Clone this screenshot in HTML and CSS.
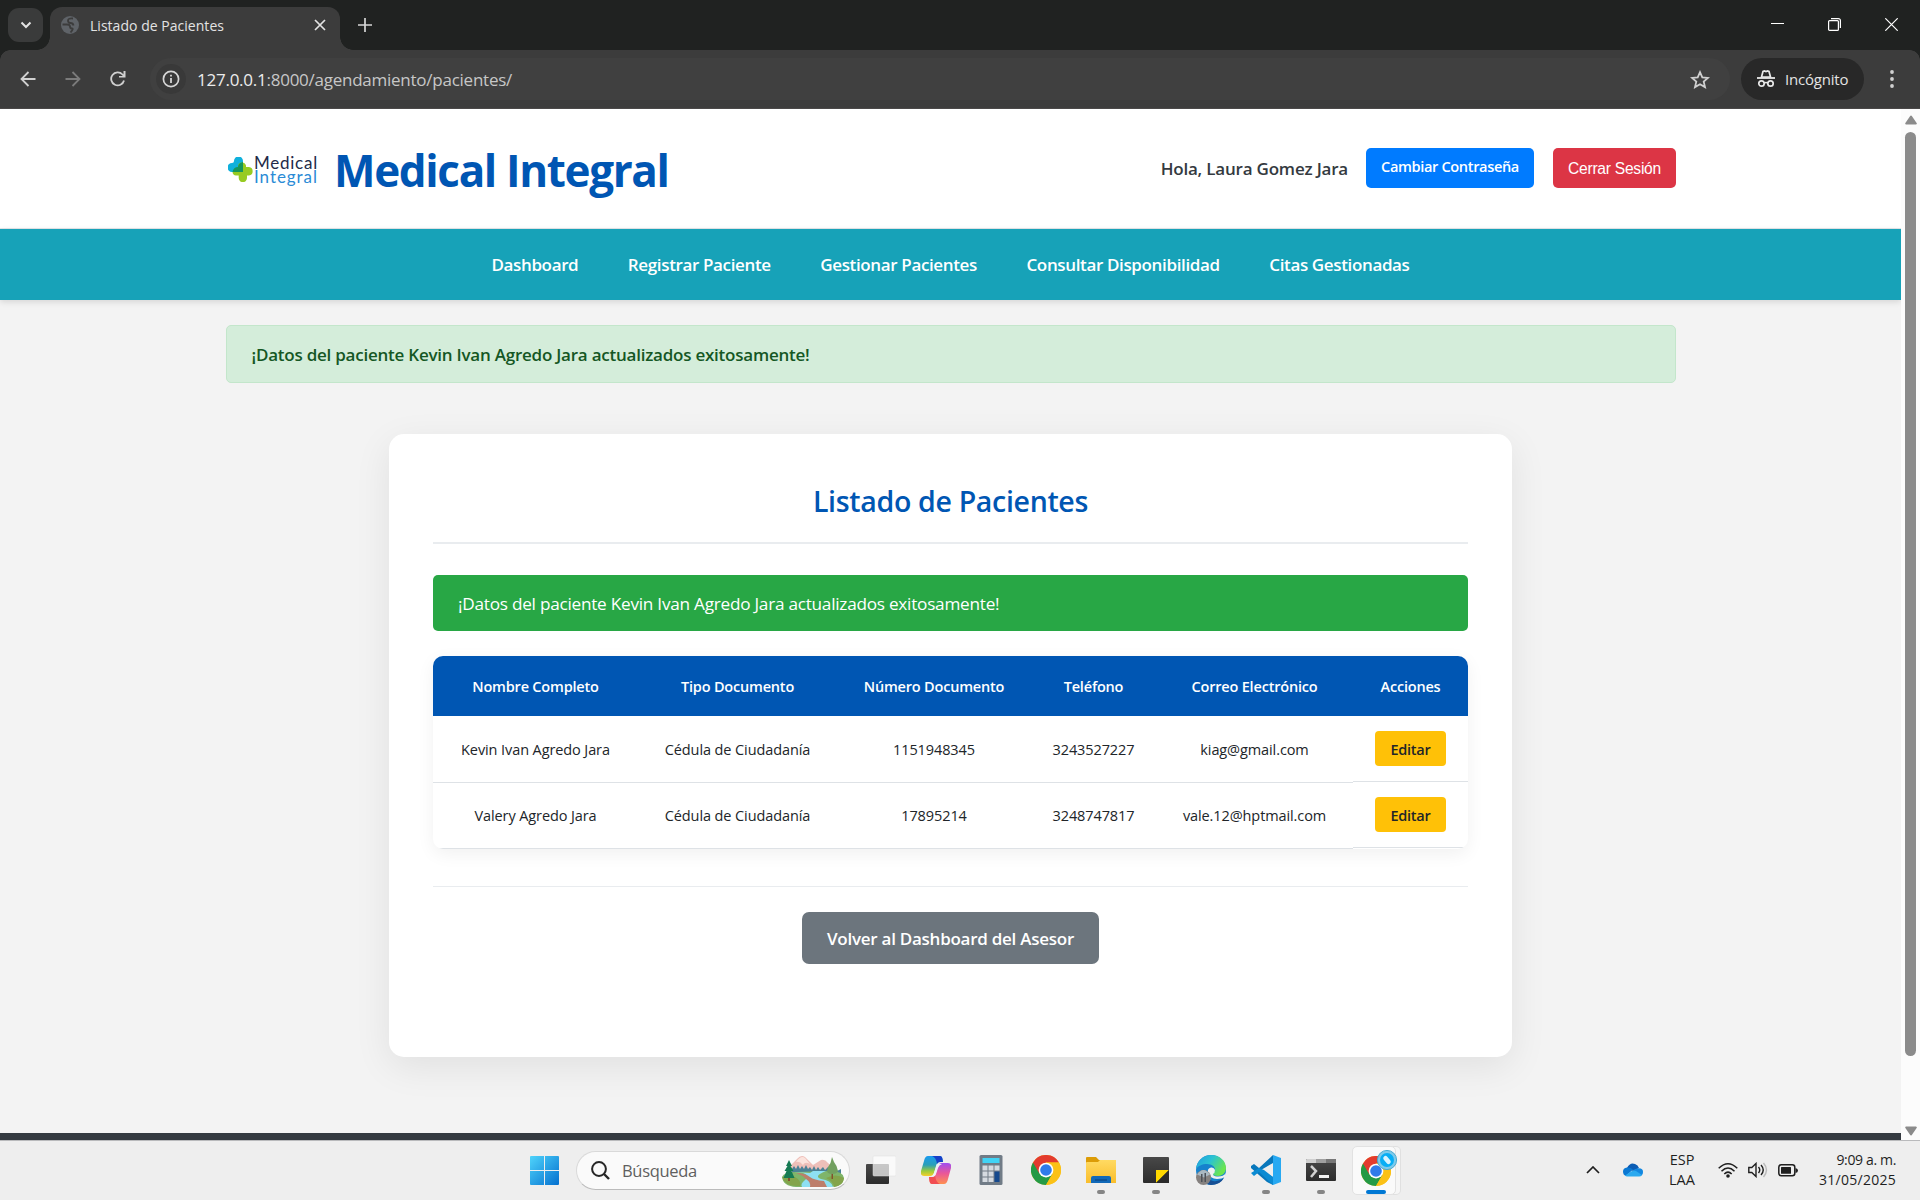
FILE: index.html
```html
<!DOCTYPE html>
<html lang="es">
<head>
<meta charset="utf-8">
<title>Listado de Pacientes</title>
<link rel="stylesheet" href="styles.css">
</head>
<body>
<svg class="defs" width="0" height="0" aria-hidden="true">
  <defs>
    <linearGradient id="winG" x1="0" y1="0" x2="1" y2="1"><stop offset="0" stop-color="#4fd4fb"/><stop offset="1" stop-color="#0470cf"/></linearGradient>
    <linearGradient id="foldG" x1="0" y1="0" x2="0" y2="1"><stop offset="0" stop-color="#ffda62"/><stop offset="1" stop-color="#f9bd2b"/></linearGradient>
    <linearGradient id="copA" x1="0" y1="0" x2="0" y2="1"><stop offset="0" stop-color="#1a9bf0"/><stop offset=".45" stop-color="#2a9fb8"/><stop offset=".75" stop-color="#9ccb3b"/><stop offset="1" stop-color="#f5cf2a"/></linearGradient>
    <linearGradient id="copB" x1="0" y1="0" x2="0" y2="1"><stop offset="0" stop-color="#a04ef0"/><stop offset=".5" stop-color="#ea5797"/><stop offset="1" stop-color="#ff9050"/></linearGradient>
    <linearGradient id="edgeA" x1="0" y1="0" x2="1" y2=".5"><stop offset="0" stop-color="#1f9be0"/><stop offset=".5" stop-color="#2bc3d2"/><stop offset="1" stop-color="#6be54e"/></linearGradient>
    <linearGradient id="darkG" x1="0" y1="0" x2="0" y2="1"><stop offset="0" stop-color="#484848"/><stop offset="1" stop-color="#2c2c2c"/></linearGradient>
    <symbol id="chrome" viewBox="0 0 48 48">
      <circle cx="24" cy="24" r="24" fill="#fbc116"/>
      <path d="M24 24 3.2 12A24 24 0 0 0 24 48L34.4 30z" fill="#249a45"/>
      <path d="M3.2 12A24 24 0 0 1 44.8 12L24 12 13.6 30z" fill="#e33b2e"/>
      <path d="M24 12h20.8A24 24 0 0 1 24 48l10.4-18z" fill="#fbc116"/>
      <circle cx="24" cy="24" r="11.8" fill="#fff"/><circle cx="24" cy="24" r="9.3" fill="#2f7bea"/>
    </symbol>
  </defs>
</svg>

<div class="tabstrip">
  <div class="tab-search"><svg width="12" height="8" viewBox="0 0 12 8"><path d="M1.5 1.5 6 6l4.500-4.500" fill="none" stroke="#e3e3e3" stroke-width="2"/></svg></div>
  <div class="tab">
    <svg width="18" height="18" viewBox="0 0 18 18"><circle cx="9" cy="9" r="9" fill="#5f6368"/><path d="M12 2.500Q7 2 7 4.500T9.500 7t3 2.500M1.500 8.500H6q3 0 3 2t2 2-1.500 4" fill="none" stroke="#3c3c3c" stroke-width="1.800"/></svg>
    <span class="tab-title">Listado de Pacientes</span>
    <svg width="12" height="12" viewBox="0 0 12 12"><path d="M1 1l10 10M11 1 1 11" stroke="#e3e3e3" stroke-width="1.700"/></svg>
  </div>
  <svg class="new-tab" width="14" height="14" viewBox="0 0 14 14"><path d="M7 0v14M0 7h14" stroke="#d6d6d6" stroke-width="1.700"/></svg>
  <div class="window-controls">
    <svg width="13" height="13" viewBox="0 0 13 13"><path d="M0 5.500h13" stroke="#fff"/></svg>
    <svg width="13" height="13" viewBox="0 0 13 13"><rect x=".6" y="2.600" width="9.800" height="9.800" rx="1" fill="none" stroke="#fff" stroke-width="1.200"/><path d="M3 .6h7.400a2 2 0 0 1 2 2V10" fill="none" stroke="#fff" stroke-width="1.200"/></svg>
    <svg width="13" height="13" viewBox="0 0 13 13"><path d="M.3.3l12.400 12.400M12.700.3.3 12.700" stroke="#fff" stroke-width="1.200"/></svg>
  </div>
</div>

<div class="toolbar">
  <div class="nav-icons">
    <svg width="16" height="16" viewBox="0 0 16 16"><path d="M15.500 8H2M8.500 1 1.500 8l7 7" fill="none" stroke="#d0d0d0" stroke-width="1.800"/></svg>
    <svg width="16" height="16" viewBox="0 0 16 16"><path d="M.5 8H14M7.500 1l7 7-7 7" fill="none" stroke="#7b7b7b" stroke-width="1.800"/></svg>
    <svg width="16" height="16" viewBox="0 0 16 16"><path d="M14 9.500A6.500 6.500 0 1 1 12.500 3.500L14.500 5.500" fill="none" stroke="#d0d0d0" stroke-width="1.800"/><path d="M15.500 0v6.500H9V5h4.500V0z" fill="#d0d0d0"/></svg>
  </div>
  <div class="omnibox">
    <div class="site-info"><svg width="18" height="18" viewBox="0 0 18 18"><circle cx="9" cy="9" r="7.600" fill="none" stroke="#d6d6d6" stroke-width="1.700"/><path d="M9 8v5M9 4.800v1.800" stroke="#d6d6d6" stroke-width="1.800"/></svg></div>
    <span class="url"><b>127.0.0.1</b>:8000/agendamiento/pacientes/</span>
    <svg class="star" width="20" height="19" viewBox="0 0 20 19"><path d="M10 2.200l2.300 5.200 5.700.5-4.300 3.700 1.300 5.500-5-2.900-5 2.900 1.300-5.500L2 7.900l5.700-.5z" fill="none" stroke="#d0d0d0" stroke-width="1.800"/></svg>
  </div>
  <div class="incognito">
    <svg width="18" height="18" viewBox="0 0 18 18"><path d="M4.500 7 6 1.500l1.500-.5 1.500.5 1.500-.5 1.500.5L13.500 7z" fill="none" stroke="#e8e8e8" stroke-width="1.700"/><path d="M0 8h18" stroke="#e8e8e8" stroke-width="1.800"/><circle cx="4.500" cy="13.500" r="2.700" fill="none" stroke="#e8e8e8" stroke-width="1.700"/><circle cx="13.500" cy="13.500" r="2.700" fill="none" stroke="#e8e8e8" stroke-width="1.700"/><path d="M7 13.200q2-1.200 4 0" fill="none" stroke="#e8e8e8" stroke-width="1.500"/></svg>
    <span class="incognito-label">Incógnito</span>
  </div>
  <svg class="kebab" width="4" height="18" viewBox="0 0 4 18"><g fill="#d0d0d0"><circle cx="2" cy="2" r="1.900"/><circle cx="2" cy="9" r="1.900"/><circle cx="2" cy="16" r="1.900"/></g></svg>
</div>

<div class="viewport">
  <div class="page">
    <header class="site-header">
      <div class="brand">
        <div class="logo">
          <svg width="25" height="25" viewBox="0 0 25 25"><path d="M6 4a4 4 0 0 1 9 0v11H4a4.500 4.500 0 0 1 0-9q2 0 2-2z" fill="#0fb0dc"/><path d="M10 10V8.500A4.200 4.200 0 0 1 18 8.500V10h3a4.300 4.300 0 0 1 0 8.500h-2V21a4 4 0 0 1-8.300 0v-2.500H8A4 4 0 0 1 4.500 15H10z" fill="#97cb22"/><path d="M15 5v10H4.500q1-5 5.500-5 0-4 5-5z" fill="#16965c"/></svg>
          <div class="logo-text"><span class="logo-top">Medical</span><span class="logo-bottom">Integral</span></div>
        </div>
        <h1>Medical Integral</h1>
      </div>
      <div class="user">
        <span class="hello">Hola, Laura Gomez Jara</span>
        <a class="btn-password">Cambiar Contraseña</a>
        <button class="btn-logout">Cerrar Sesión</button>
      </div>
    </header>
    <nav class="main-nav">
      <a>Dashboard</a>
      <a>Registrar Paciente</a>
      <a>Gestionar Pacientes</a>
      <a>Consultar Disponibilidad</a>
      <a>Citas Gestionadas</a>
    </nav>
    <div class="alert">¡Datos del paciente Kevin Ivan Agredo Jara actualizados exitosamente!</div>
    <main class="card">
      <h2>Listado de Pacientes</h2>
      <div class="success">¡Datos del paciente Kevin Ivan Agredo Jara actualizados exitosamente!</div>
      <div class="table">
        <div class="row head">
          <div>Nombre Completo</div><div>Tipo Documento</div><div>Número Documento</div><div>Teléfono</div><div>Correo Electrónico</div><div>Acciones</div>
        </div>
        <div class="row first">
          <div>Kevin Ivan Agredo Jara</div><div>Cédula de Ciudadanía</div><div>1151948345</div><div>3243527227</div><div>kiag@gmail.com</div><div class="actions"><a class="edit">Editar</a></div>
        </div>
        <div class="row">
          <div>Valery Agredo Jara</div><div>Cédula de Ciudadanía</div><div>17895214</div><div>3248747817</div><div>vale.12@hptmail.com</div><div class="actions"><a class="edit">Editar</a></div>
        </div>
      </div>
      <div class="card-footer"><a class="back">Volver al Dashboard del Asesor</a></div>
    </main>
    <footer class="site-footer"></footer>
  </div>
  <div class="scrollbar">
    <svg width="12" height="10" viewBox="0 0 12 10"><path d="M6 1.500 10.800 8.500H1.200z" fill="#8b8b8b" stroke="#8b8b8b" stroke-width="2" stroke-linejoin="round"/></svg>
    <div class="thumb"></div>
    <svg width="12" height="10" viewBox="0 0 12 10"><path d="M6 8.500 10.800 1.500H1.200z" fill="#8b8b8b" stroke="#8b8b8b" stroke-width="2" stroke-linejoin="round"/></svg>
  </div>
</div>

<div class="taskbar">
  <div class="slot"><svg width="29" height="29" viewBox="0 0 29 29"><path d="M1 0h13v14H0V1q0-1 1-1zM15 0h13q1 0 1 1v13H15zM0 15h14v14H1q-1 0-1-1zM15 15h14v13q0 1-1 1H15z" fill="url(#winG)"/></svg></div>
  <div class="search">
    <svg width="19" height="19" viewBox="0 0 19 19"><circle cx="8" cy="8" r="6.900" fill="none" stroke="#262626" stroke-width="2"/><path d="M13 13l5 5" stroke="#262626" stroke-width="2.400"/></svg>
    <span class="search-label">Búsqueda</span>
    <svg class="landscape" width="62" height="32" viewBox="0 0 62 32">
      <path d="M5 14 15 4q4-5 8-2l8 8 8-5q4-1 7 3l10 9v8H5z" fill="#eebfb9"/><path d="M14 7q5-7 9-4l5 6q-5-3-7 1-3-4-7-3z" fill="#fbe3dd"/>
      <path d="M10 19v-5l2-3 2 3 2-4 2 4 2-3 2 3 2-4 2 4 2-2 2 3 2-4 2 4 2-3 2 3 3-3 2 3 3-3 3 3 3-2 3 3 4-2v5z" fill="#4b8195"/>
      <path d="M0 22q2-5 14-5l34-1q13 0 14 7-1 9-14 9H14Q1 31 0 22z" fill="#7fb56a"/><path d="M12 17l9 1q8 3 2 7-5 4-3 7h31q-2-7-12-8-8-3 5-8H31l-3 2z" fill="#8ee0f3"/>
      <path d="M14 18q9 0 14 4 4 3 14 4l3 6H28q1-5-4-8-4-4-10-6z" fill="#bd7e6b"/><path d="M0 22q7-2 13 0 7 4 5 9Q3 32 0 22zM44 23q10-5 18 0-1 8-10 9 0-5-8-9z" fill="#83a44b"/>
      <path d="M7 5 10 11H8.500l3 5H9.500l3 7h-11l3-7H2.500l3-5H4z" fill="#157a53"/><path d="M6 23h2v3H6zM49.500 18h1.500v6h-1.500z" fill="#83522e"/><path d="M50 2l2 5 2.500 4 1.500 5q-1 3-6 3-4.500 0-5-3l1-4 2.500-4z" fill="#72a060"/>
    </svg>
  </div>
  <div class="apps">
    <div class="slot"><svg width="30" height="30" viewBox="0 0 30 30"><rect x="0" y="9" width="23" height="20" rx="1" fill="url(#darkG)"/><rect x="7" y="1" width="23" height="20" rx="1" fill="#fff" fill-opacity=".7" stroke="#ddd" stroke-width=".5"/></svg></div>
    <div class="slot"><svg width="30" height="30" viewBox="0 0 30 30"><path d="M7 1h12q2 0 2.500 3l.5 3h-3q-3 0-4 4l-2 7q-1 3-4 3H3q-4 0-3-5L3 6Q4 1 7 1z" fill="url(#copA)"/><path d="M23 29H11q-2 0-2.500-3L8 22h3q3 0 4-4l2-7q1-3 4-3h6q4 0 3 5l-3 11q-1 5-4 5z" fill="url(#copB)"/><path d="M11 1h8q2 0 2.500 3l.5 3h-3q-2 0-3 2-1-7-5-8z" fill="#173fc8"/><path d="M19 29h-8q-2 0-2.500-3L8 22h3q2 0 3-2 1 8 5 9z" fill="#f14d52"/><path d="M16 9h5q-3 1-4 4l-2 6q-1 3-4 3H9q3-1 4-4z" fill="#eef0f5"/></svg></div>
    <div class="slot"><svg width="24" height="30" viewBox="0 0 24 30"><rect x=".5" width="23" height="30" rx="1.500" fill="#707b86"/><rect x="3.500" y="3" width="17" height="5" fill="#41d3f5"/><g fill="#d5dae0"><path d="M3.500 10.500h5v5h-5zM9.500 10.500h5v5h-5zM15.500 10.500h5v5h-5zM3.500 16.500h5v5h-5zM9.500 16.500h5v5h-5zM3.500 22.500h5v4.500h-5zM9.500 22.500h5v4.500h-5z"/></g><path d="M15.500 16.500h5V27h-5z" fill="#15498e"/></svg></div>
    <div class="slot"><svg width="30" height="30"><use href="#chrome"/></svg></div>
    <div class="slot running"><svg width="30" height="30" viewBox="0 0 30 30"><path d="M0 3q0-1 1-1h9l3 3h17v6H0z" fill="#dc9c07"/><path d="M0 8q0-1 1-1h11l2-2h16v23H0z" fill="url(#foldG)"/><path d="M5 28v-5q0-2 2-2h16q2 0 2 2v5z" fill="#1269b8"/><path d="M9 25h12" stroke="#093f79"/></svg></div>
    <div class="slot running"><svg width="28" height="30" viewBox="0 0 28 30"><rect x="1" y="2" width="26" height="26" rx="1" fill="url(#darkG)"/><path d="M14 15h13L14 28z" fill="#ffd900"/><path d="M27 15v13H14z" fill="#2b2b2b"/></svg></div>
    <div class="slot"><svg width="30" height="30" viewBox="0 0 30 30"><circle cx="15" cy="15" r="15" fill="#1682cd"/><path d="M0 14C1 5 8 0 15 0c9 0 15 6 15 13 0 5-4 8-8 8-3 0-5-1-5-2 0-1 2-2 2-5 0-2-3-5-8-5C6 9 2 11 0 14z" fill="url(#edgeA)"/><path d="M11 16q-1 8 6 10 6 1 11-3-4 7-13 7-6 0-9-7 0-5 5-7z" fill="#164f94"/><path d="M30 18q-3 4-9 3.500-4-.5-4-2.500 2-1 2-4-1-3-4-2.500-4 1-3 5 2 6 9 6.500 5 0 8-2z" fill="#eeeff1"/><circle cx="7.500" cy="22.500" r="7.500" fill="#85817f"/><path d="M1 19.500q6.500-9 13 0l-6 3z" fill="#a9b8c2"/><path d="M5 19h1.500v8H5zM8.500 18h1.500v9H8.500z" fill="#4c5158"/></svg></div>
    <div class="slot running"><svg width="30" height="30" viewBox="0 0 30 30"><path d="M22 0 8 13 3 9 0 11v2l16 14 6 3V22L10 15 22 8z" fill="#0877bb"/><path d="M0 18l3 3 5-4L22 30v-8l-9-7-5-2z" fill="#0b8bd3"/><path d="M22 0l8 3v24l-8 3z" fill="#27a9f2"/></svg></div>
    <div class="slot running"><svg width="30" height="30" viewBox="0 0 30 30"><rect y="4" width="30" height="22" rx="1" fill="url(#darkG)"/><path d="M0 8V5q0-1 1-1h9v4z" fill="#d0d0d0"/><path d="M10 4h10v4H10z" fill="#a0a0a0"/><path d="M20 4h9q1 0 1 1v3H20z" fill="#777"/><path d="M5 11l5 5-5 6" fill="none" stroke="#d2d2d2" stroke-width="2.500"/><path d="M13 21.500h10" stroke="#f2f2f2" stroke-width="3"/></svg></div>
    <div class="slot active"><div class="tile"><svg width="36" height="36" viewBox="0 0 36 36"><svg y="6" width="30" height="30"><use href="#chrome"/></svg><circle cx="26" cy="10" r="9.600" fill="#7ecbeb" stroke="#4aa9d0"/><circle cx="26" cy="10" r="7" fill="#08aef5"/><path d="M24.500 8.200l3 3.600" stroke="#d9f4ff" stroke-width="4.500" stroke-linecap="round"/></svg></div></div>
  </div>
  <div class="tray">
    <svg class="chev" width="14" height="8" viewBox="0 0 14 8"><path d="M1 7l6-6 6 6" fill="none" stroke="#1f1f1f" stroke-width="1.700"/></svg>
    <svg class="cloud" width="20" height="14" viewBox="0 0 20 14"><path d="M4 5q3-6 8-4 3 1 4 4l-6 3z" fill="#0b5cb4"/><path d="M4 4.500Q7 4 10 6.500L3 13Q0 12 0 8.500q0-3.500 4-4z" fill="#0a78d3"/><path d="M14 5.500q6-1 6 3.500 0 4-4 4l-6-6z" fill="#1287e0"/><path d="M2 12.500 9 8q2-1 4 0l6 4q-1 1.500-3 1.500H4q-1 0-2-1z" fill="#2aa9ef"/></svg>
    <div class="lang"><span>ESP</span><span>LAA</span></div>
    <svg class="wifi" width="20" height="16" viewBox="0 0 20 16"><g fill="none" stroke="#1f1f1f" stroke-width="1.500"><path d="M.7 6.300q9.300-9 18.600 0M3.500 9.200q6.500-6.500 13 0M6.300 12q3.700-3.700 7.400 0"/></g><circle cx="10" cy="14" r="1.800" fill="#1f1f1f"/></svg>
    <svg class="sound" width="20" height="16" viewBox="0 0 20 16"><path d="M.8 5.500h3L8 1.500v13l-4.200-4h-3z" fill="none" stroke="#1f1f1f" stroke-width="1.400"/><path d="M10.500 5q2.500 3 0 6M13 3q4.500 5 0 10" fill="none" stroke="#1f1f1f" stroke-width="1.400"/><path d="M15.500 1q6 7 0 14" fill="none" stroke="#bbb" stroke-width="1.400"/></svg>
    <svg class="battery" width="20" height="13" viewBox="0 0 20 13"><rect x=".8" y=".8" width="16" height="11" rx="2.500" fill="none" stroke="#1f1f1f" stroke-width="1.500"/><rect x="3" y="3" width="10" height="6.800" rx=".5" fill="#1f1f1f"/><path d="M17.500 4q2.500.5 2.500 2.500T17.500 9z" fill="#1f1f1f"/></svg>
    <div class="clock"><span class="time">9:09 a. m.</span><span class="date">31/05/2025</span></div>
  </div>
</div>
</body>
</html>
```
FILE: styles.css
```css
* { box-sizing: border-box; }
body { margin: 0; width: 1920px; height: 1200px; overflow: hidden; display: flex; flex-direction: column; font-family: "Open Sans", "Noto Sans", sans-serif; background: #f3f3f3; color: #212529; white-space: nowrap; }
svg { display: block; flex: none; }
.defs { position: absolute; }

/* browser chrome */
.tabstrip { position: relative; z-index: 1; height: 50px; flex: none; background: #202221; display: flex; align-items: flex-end; padding-left: 8px; }
.tab-search { width: 35px; height: 34px; margin: 0 7px 8px 0; border-radius: 11px; background: #3a3b3b; display: flex; align-items: center; justify-content: center; }
.tab { position: relative; width: 290px; height: 43px; border-radius: 12px 12px 0 0; background: #3c3c3c; display: flex; align-items: center; padding: 0 14px 7px 11px; }
.tab::before, .tab::after { content: ""; position: absolute; bottom: 0; width: 13px; height: 13px; }
.tab::before { left: -13px; background: radial-gradient(circle at 0 0, transparent 12.5px, #3c3c3c 13px); }
.tab::after { right: -13px; background: radial-gradient(circle at 100% 0, transparent 12.5px, #3c3c3c 13px); }
.tab-title { flex: 1; margin-left: 11px; font-size: 14px; letter-spacing: .03px; color: #e3e3e3; }
.new-tab { margin: 0 0 18px 18px; }
.window-controls { margin-left: auto; display: flex; gap: 44px; padding: 0 22px 19px 0; }
.toolbar { height: 59px; flex: none; background: radial-gradient(circle at 10px 10px, #3c3c3c 9.5px, #202221 10px) 0 0 / 10px 10px no-repeat, radial-gradient(circle at 0 10px, #3c3c3c 9.5px, #202221 10px) 100% 0 / 10px 10px no-repeat, #3c3c3c; display: flex; align-items: center; padding: 0 0 1px 20px; box-shadow: inset 0 -1px #4a4848; }
.nav-icons { display: flex; gap: 29px; width: 130px; }
.omnibox { width: 1580px; height: 42px; border-radius: 21px; background: #404040; display: flex; align-items: center; padding: 0 20px 0 6px; }
.site-info { width: 30px; height: 30px; border-radius: 50%; background: #393939; display: flex; align-items: center; justify-content: center; }
.url { flex: 1; margin-left: 11px; font-size: 17px; letter-spacing: -.25px; color: #c7c7c7; }
.url b { font-weight: 400; color: #ececec; }
.incognito { width: 123px; height: 42px; margin-left: 11px; border-radius: 21px; background: #282828; display: flex; align-items: center; padding: 0 0 1px 16px; gap: 10px; }
.incognito-label { font-size: 15px; letter-spacing: -.2px; color: #e3e3e3; }
.kebab { margin-left: 26px; }

/* page */
.viewport { height: 1031px; flex: none; display: flex; }
.page { width: 1901px; display: flex; flex-direction: column; }
.site-header { height: 120px; flex: none; background: #fff; border-bottom: 1px solid #e3e6e9; display: flex; justify-content: space-between; padding: 0 225px 0 228px; }
.brand { display: flex; align-items: center; gap: 16px; }
.logo { display: flex; gap: 1px; align-items: center; width: 90px; padding-top: 2px; }
.logo-text { display: flex; flex-direction: column; font-family: Lato, sans-serif; font-size: 17px; line-height: 14px; }
.logo-top { color: #232a49; letter-spacing: .75px; }
.logo-bottom { color: #2b8bd6; letter-spacing: .95px; }
h1 { margin: 3px 0 0; font-size: 44px; line-height: 60px; font-weight: 700; letter-spacing: -1.350px; color: #0056b3; }
.user { display: flex; align-items: center; padding-bottom: 1px; }
.hello { margin-right: 18px; font-size: 17px; font-weight: 600; letter-spacing: -.2px; color: #343a40; }
.btn-password { width: 168px; height: 40px; margin-right: 19px; border-radius: 5px; background: #007bff; color: #fff; font-size: 14.600px; line-height: 37px; font-weight: 600; letter-spacing: -.37px; text-align: center; }
.btn-logout { width: 123px; height: 40px; padding: 2px 0 0; border: 0; border-radius: 5px; background: #dc3545; color: #fff; font: 15.600px/1 "Liberation Sans", Arial, sans-serif; letter-spacing: -.25px; }
.main-nav { height: 71px; flex: none; background: #17a2b8; box-shadow: 0 2px 6px rgba(0,0,0,.12); display: flex; justify-content: center; align-items: center; gap: 49.500px; color: #fff; font-size: 17px; font-weight: 600; letter-spacing: -.36px; }
.alert { width: 1450px; height: 58px; flex: none; align-self: center; margin-top: 25px; border: 1px solid #c3e6cb; border-radius: 5px; background: #d4edda; color: #155724; display: flex; align-items: center; padding-left: 25px; font-size: 17px; font-weight: 600; letter-spacing: -.235px; }
.card { width: 1123px; height: 623px; flex: none; align-self: center; margin-top: 51px; padding: 0 44px; border-radius: 15px; background: #fff; box-shadow: 0 10px 37px rgba(0,0,0,.08); display: flex; flex-direction: column; }
h2 { margin: 0 0 31px; height: 110px; padding-top: 44px; border-bottom: 2px solid #e9ecef; font-size: 28.500px; line-height: 46px; font-weight: 600; letter-spacing: -.32px; color: #0056b3; text-align: center; }
.success { height: 56px; border-radius: 5px; background: #28a745; color: #fff; display: flex; align-items: center; padding-left: 25px; font-size: 17.200px; letter-spacing: -.25px; }
.table { margin-top: 25px; height: 193px; border-radius: 10px; overflow: hidden; background: #fff; box-shadow: 0 5px 18px rgba(0,0,0,.06); }
.row { display: grid; grid-template-columns: 205px 199px 194px 125px 197px 115px; height: 66px; font-size: 14.500px; letter-spacing: -.1px; }
.row > div { display: flex; align-items: center; justify-content: center; border-bottom: 1px solid #dee2e6; padding-bottom: 1px; }
.row.head { height: 60px; background: #0056b3; color: #fff; font-weight: 600; letter-spacing: -.19px; }
.row.head > div { border: 0; padding: 0; }
.row.first { height: 67px; padding-top: 1px; }
.row > .actions { height: 65px; }
.edit { width: 71px; height: 35px; border-radius: 4px; background: #ffc107; color: #212529; font-weight: 600; letter-spacing: -.25px; line-height: 37px; text-align: center; }
.card-footer { margin-top: 37px; padding-top: 25px; border-top: 1px solid #e9ecef; display: flex; justify-content: center; }
.back { width: 297px; height: 52px; border-radius: 7px; background: #6c757d; color: #fff; font-size: 17px; font-weight: 600; letter-spacing: -.26px; line-height: 53px; text-align: center; }
.site-footer { height: 7px; margin-top: auto; background: #343a40; }
.scrollbar { width: 19px; background: #fcfcfc; display: flex; flex-direction: column; align-items: center; padding: 6px 0 4px; }
.thumb { width: 11px; height: 924px; border-radius: 6px; background: #8b8b8b; margin: 7px 0 auto; }

/* taskbar */
.taskbar { height: 60px; flex: none; background: #eee; box-shadow: inset 0 1px #b9babc; display: flex; align-items: center; padding-left: 517px; }
.slot { position: relative; width: 55px; height: 60px; display: flex; align-items: center; justify-content: center; }
.search { width: 274px; height: 39px; margin: 1px 3px 0 4px; border-radius: 20px; border: 1px solid #d9d9d9; border-bottom-color: #bbb; background: #fafafa; display: flex; align-items: center; padding: 0 5px 0 14px; }
.search-label { flex: 1; margin-left: 12px; font-size: 16.500px; letter-spacing: -.3px; color: #5f5f5f; }
.apps { display: flex; }
.running::after, .active::after { content: ""; position: absolute; bottom: 6px; left: 24px; width: 8px; height: 4px; border-radius: 2px; background: #858585; }
.active::after { left: 18px; width: 20px; background: #0078d4; }
.tile { width: 44px; height: 49px; margin: 0 0 0 -3px; border: 1px solid #e2e2e2; border-radius: 5px; background: #fafafa; box-shadow: 5px 0 0 -1px #f6f6f6, 5px 0 0 #e0e0e0; padding: 3px 0 0 8px; }
.tray { margin-left: auto; display: flex; align-items: center; padding-right: 24px; color: #1f1f1f; font-size: 14px; line-height: 20px; }
.cloud { margin: -1px 26px 0 23px; }
.lang { display: flex; flex-direction: column; align-items: center; width: 26px; margin-right: 23px; font-size: 14.500px; }
.sound { margin: 0 10px; }
.clock { display: flex; flex-direction: column; align-items: flex-end; width: 98px; }
.time { letter-spacing: -.35px; }
.date { letter-spacing: .27px; }
```
